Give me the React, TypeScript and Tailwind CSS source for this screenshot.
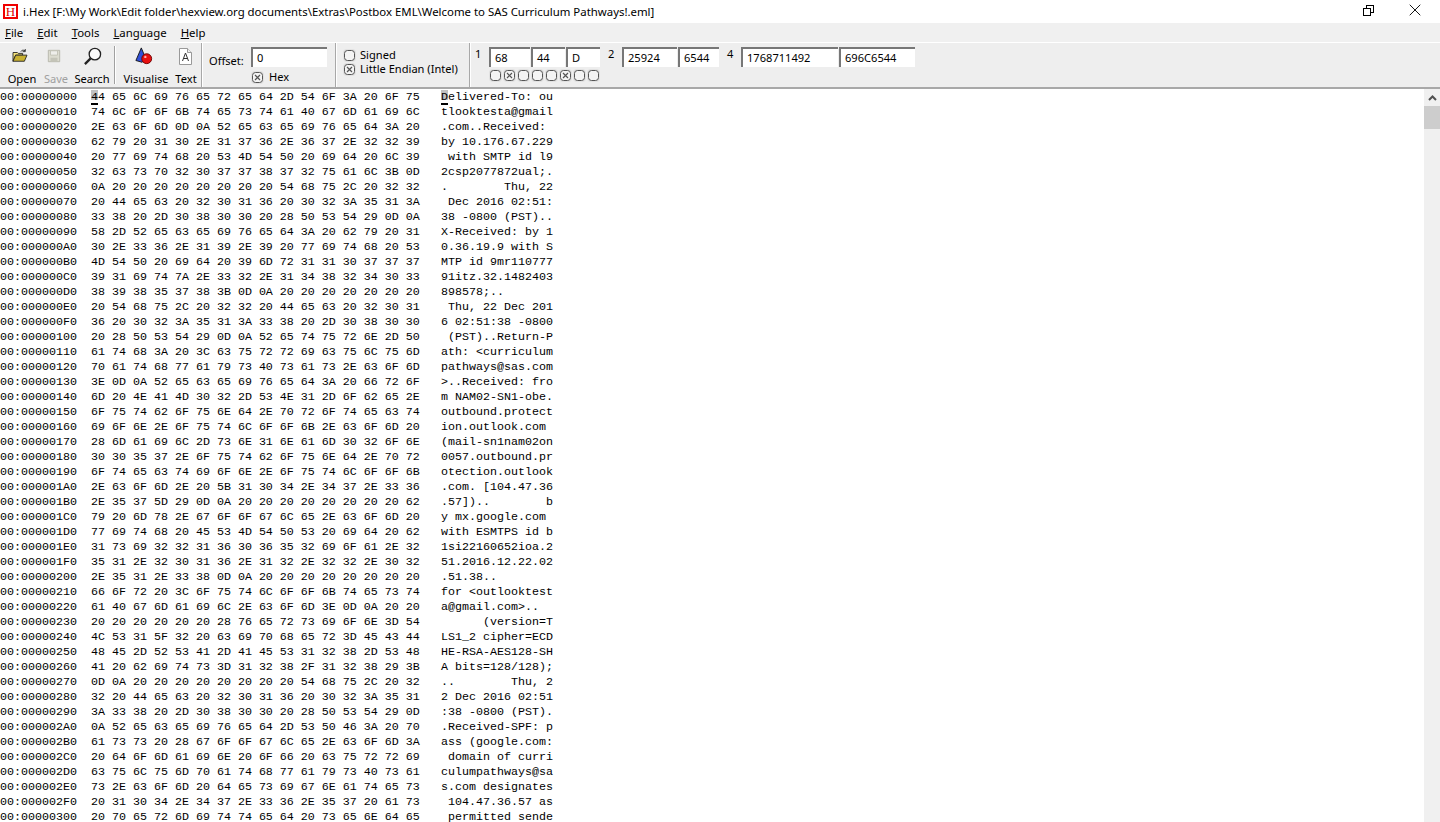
import React from 'react';
import { X } from 'lucide-react';

const sans = "font-['Noto_Sans',sans-serif]";

// raw bytes of the opened file, 16 per row
const lines = [
  'Delivered-To: ou', 'tlooktesta@gmail', '.com\r\nReceived: ', 'by 10.176.67.229', ' with SMTP id l9',
  '2csp2077872ual;\r', '\n        Thu, 22', ' Dec 2016 02:51:', '38 -0800 (PST)\r\n', 'X-Received: by 1',
  '0.36.19.9 with S', 'MTP id 9mr110777', '91itz.32.1482403', '898578;\r\n       ', ' Thu, 22 Dec 201',
  '6 02:51:38 -0800', ' (PST)\r\nReturn-P', 'ath: <curriculum', 'pathways@sas.com', '>\r\nReceived: fro',
  'm NAM02-SN1-obe.', 'outbound.protect', 'ion.outlook.com ', '(mail-sn1nam02on', '0057.outbound.pr',
  'otection.outlook', '.com. [104.47.36', '.57])\r\n        b', 'y mx.google.com ', 'with ESMTPS id b',
  '1si22160652ioa.2', '51.2016.12.22.02', '.51.38\r\n        ', 'for <outlooktest', 'a@gmail.com>\r\n  ',
  '      (version=T', 'LS1_2 cipher=ECD', 'HE-RSA-AES128-SH', 'A bits=128/128);', '\r\n        Thu, 2',
  '2 Dec 2016 02:51', ':38 -0800 (PST)\r', '\nReceived-SPF: p', 'ass (google.com:', ' domain of curri',
  'culumpathways@sa', 's.com designates', ' 104.47.36.57 as', ' permitted sende',
];

const toHex = (s: string) =>
  s.split('').map((c) => c.charCodeAt(0).toString(16).toUpperCase().padStart(2, '0')).join(' ');
const toText = (s: string) => s.replace(/[\r\n]/g, '.');
const toOffset = (i: number) => '00:' + (i * 16).toString(16).toUpperCase().padStart(8, '0');

const Check = ({ on }: { on?: boolean }) => (
  <svg width="13" height="13" viewBox="0 0 13 13" className="shrink-0">
    <rect x="0" y="0" width="13" height="13" rx="4" fill="#e2e2e2" />
    <rect x="1.5" y="1.5" width="10" height="10" rx="3" fill="#f4f4f4" stroke="#555" />
    {on && <path d="M4 4l5 5M9 4l-5 5" stroke="#555" strokeWidth="1.2" />}
  </svg>
);

const ToolButton = ({ label, icon, disabled, w, iconCls }: { label: string; icon: React.ReactNode; disabled?: boolean; w: string; iconCls?: string }) => (
  <div className={`flex flex-col items-center ${w}`}>
    <div className={`h-[24px] flex items-center justify-center ${iconCls ?? ''}`}>{icon}</div>
    <span className={`text-[11.1px] leading-[14px] mt-[4px] ${disabled ? 'text-[#a0a0a0]' : 'text-black'}`}>{label}</span>
  </div>
);

const Field = ({ value, w }: { value: string; w: string }) => (
  <div className={`h-[20px] ${w} bg-white border-t-2 border-l-2 border-t-[#777] border-l-[#777] pl-[4px] text-[11.1px] leading-[18px] text-black`}>
    {value}
  </div>
);

const Num = ({ n, cls }: { n: string; cls?: string }) => (
  <span className={`w-[14px] text-[11.1px] leading-[14px] text-black ${cls ?? ''}`}>{n}</span>
);

const Sep = () => <div className="w-[2px] shrink-0 self-stretch border-l border-l-[#a8a8a8] border-r border-r-white" />;

export default function App() {
  return (
    <div className={`w-[1440px] h-[822px] overflow-hidden flex flex-col bg-white ${sans}`}>
      {/* title bar */}
      <div className="h-[23px] shrink-0 flex items-center bg-white">
        <div className="ml-[3px] w-[15px] h-[15px] border-2 border-[#f00000] flex items-center justify-center font-['Liberation_Serif',serif] text-[13px] leading-none text-[#e00000] bg-white">
          H
        </div>
        <span className="ml-[5px] text-[11.4px] text-black whitespace-pre">
          {'i.Hex [F:\\My Work\\Edit folder\\hexview.org documents\\Extras\\Postbox EML\\Welcome to SAS Curriculum Pathways!.eml]'}
        </span>
        <div className="ml-auto flex items-center mr-[15px] mb-[3px] gap-[31px]">
          <div className="relative w-[11px] h-[11px]">
            <div className="absolute right-0 top-0 w-[8px] h-[8px] border border-black" />
            <div className="absolute left-0 bottom-0 w-[8px] h-[8px] border border-black bg-white" />
          </div>
          <X size={20} strokeWidth={1.1} className="text-black" />
        </div>
      </div>

      {/* menu bar */}
      <div className="h-[20px] shrink-0 bg-[#f0f0f0] border-b border-b-white flex items-center text-[11.4px] text-black leading-none">
        <span className="ml-[5px]"><u>F</u>ile</span>
        <span className="ml-[14px]"><u>E</u>dit</span>
        <span className="ml-[14px]"><u>T</u>ools</span>
        <span className="ml-[14px]"><u>L</u>anguage</span>
        <span className="ml-[14px]"><u>H</u>elp</span>
      </div>

      {/* toolbar */}
      <div className="h-[46px] shrink-0 bg-[#eeeeee] border-b-2 border-b-[#a8a8a8] flex items-stretch">
        <div className="flex items-start w-[201px] shrink-0 pt-[1px] pl-[5px]">
          <ToolButton
            label="Open"
            w="w-[34px]"
            iconCls="pr-[4px]"
            icon={
              <svg width="16" height="14" viewBox="0 0 18 16">
                <path d="M1 4h5l1 1h5v2H4L1 14z" fill="#f4e27a" stroke="#222" />
                <path d="M1 14l3-7h13l-3 7z" fill="#c8b030" stroke="#222" />
                <path d="M10 3c1-2 3-2 5-1M15 0v3h-3" fill="none" stroke="#222" />
              </svg>
            }
          />
          <ToolButton
            label="Save"
            disabled
            w="w-[34px]"
            iconCls="pr-[5px]"
            icon={
              <svg width="14" height="14" viewBox="0 0 16 16">
                <path d="M1.5 1.5h13v13h-13z" fill="#dcdcd0" stroke="#b4b4a8" />
                <path d="M4 2h8v5H4z" fill="#eeeeea" stroke="#c0c0b4" />
                <path d="M4 10h8v4H4z" fill="#c4c4b8" />
              </svg>
            }
          />
          <ToolButton
            label="Search"
            w="w-[38px]"
            icon={
              <svg width="19" height="19" viewBox="0 0 20 20">
                <circle cx="12.5" cy="7.5" r="6" fill="#fafafa" stroke="#222" strokeWidth="1.4" />
                <path d="M8 12l-6 6" stroke="#222" strokeWidth="2.4" />
              </svg>
            }
          />
          <div className="w-[2px] h-[38px] ml-[3px] mt-[2px] border-l border-l-[#a0a0a0] border-r border-r-white" />
          <ToolButton
            label="Visualise"
            w="w-[50px] ml-[5px]"
            iconCls="pr-[5px]"
            icon={
              <svg width="18" height="18" viewBox="0 0 20 20">
                <path d="M1 15L7 1l5 12-4 4z" fill="#3050d8" stroke="#111" />
                <circle cx="13" cy="13" r="5.5" fill="#e81010" stroke="#600" />
                <circle cx="11.5" cy="11" r="1.3" fill="#ffb0b0" />
              </svg>
            }
          />
          <ToolButton
            label="Text"
            w="w-[24px] ml-[3px]"
            iconCls="pr-[2px]"
            icon={
              <svg width="13" height="17" viewBox="0 0 13 17">
                <path d="M.5.5h8l4 4v12H.5z" fill="#fff" stroke="#999" />
                <path d="M8.5.5v4h4" fill="#eee" stroke="#999" />
                <path d="M3.5 13l3-8 3 8M4.6 10.5h3.8" fill="none" stroke="#333" />
              </svg>
            }
          />
        </div>
        <Sep />
        <div className="w-[132px] shrink-0 flex items-start pt-[4px] pl-[6px]">
          <span className="w-[42px] text-[11.1px] leading-[14px] mt-[7px] text-black">Offset:</span>
          <div className="flex flex-col items-stretch w-[76px]">
            <Field value="0" w="w-[76px]" />
            <div className="flex items-center mt-[3px]">
              <Check on />
              <span className="ml-[5px] text-[11.1px] leading-[14px] text-black">Hex</span>
            </div>
          </div>
        </div>
        <Sep />
        <div className="w-[132px] shrink-0 flex flex-col pt-[5px] pl-[6px]">
          <div className="flex items-center h-[14px]">
            <Check />
            <span className="ml-[4px] text-[11.1px] leading-[14px] text-black">Signed</span>
          </div>
          <div className="flex items-center h-[14px]">
            <Check on />
            <span className="ml-[4px] text-[11.1px] leading-[14px] text-black whitespace-nowrap">Little Endian (Intel)</span>
          </div>
        </div>
        <Sep />
        <div className="flex-1 flex flex-col pt-[4px] pl-[4px]">
          <div className="flex items-start h-[20px]">
            <Num n="1" />
            <div className="flex gap-[1px]">
              <Field value="68" w="w-[41px]" />
              <Field value="44" w="w-[34px]" />
              <Field value="D" w="w-[34px]" />
            </div>
            <Num n="2" cls="ml-[8px]" />
            <div className="flex gap-[1px]">
              <Field value="25924" w="w-[55px]" />
              <Field value="6544" w="w-[41px]" />
            </div>
            <Num n="4" cls="ml-[8px]" />
            <div className="flex gap-[1px]">
              <Field value="1768711492" w="w-[97px]" />
              <Field value="696C6544" w="w-[76px]" />
            </div>
          </div>
          <div className="flex ml-[14px] mt-[2px] gap-[1px]">
            {[false, true, false, false, false, true, false, false].map((on, i) => (
              <Check key={i} on={on} />
            ))}
          </div>
        </div>
      </div>

      {/* hex view */}
      <div className="flex-1 min-h-0 flex">
        <div className="flex-1 min-w-0 overflow-hidden font-['Liberation_Mono',monospace] text-[11.665px] leading-[15px] text-black whitespace-pre pt-[1px]">
          {lines.map((l, i) => (
            <div key={i} className="flex h-[15px]">
              <span className="w-[91px]">{toOffset(i)}</span>
              <span className="w-[350px]">
                {i === 0 ? (
                  <>
                    <span className="inline-block h-[15px] bg-[linear-gradient(#c0c0c0_0_10px,transparent_10px_13px,#000_13px_15px)]">4</span>
                    {toHex(l).slice(1)}
                  </>
                ) : (
                  toHex(l)
                )}
              </span>
              <span>
                {i === 0 ? (
                  <>
                    <span className="inline-block h-[15px] bg-[linear-gradient(#c0c0c0_0_10px,transparent_10px_13px,#000_13px_15px)]">D</span>
                    {l.slice(1)}
                  </>
                ) : (
                  toText(l)
                )}
              </span>
            </div>
          ))}
        </div>
        {/* scrollbar */}
        <div className="w-[16px] shrink-0 bg-[#f0f0f0] flex flex-col">
          <div className="h-[17px] flex items-center justify-center">
            <svg width="9" height="6" viewBox="0 0 9 6">
              <path d="M1 5l3.5-3.5L8 5" fill="none" stroke="#505050" strokeWidth="2" />
            </svg>
          </div>
          <div className="h-[23px] bg-[#cdcdcd]" />
        </div>
      </div>
    </div>
  );
}
